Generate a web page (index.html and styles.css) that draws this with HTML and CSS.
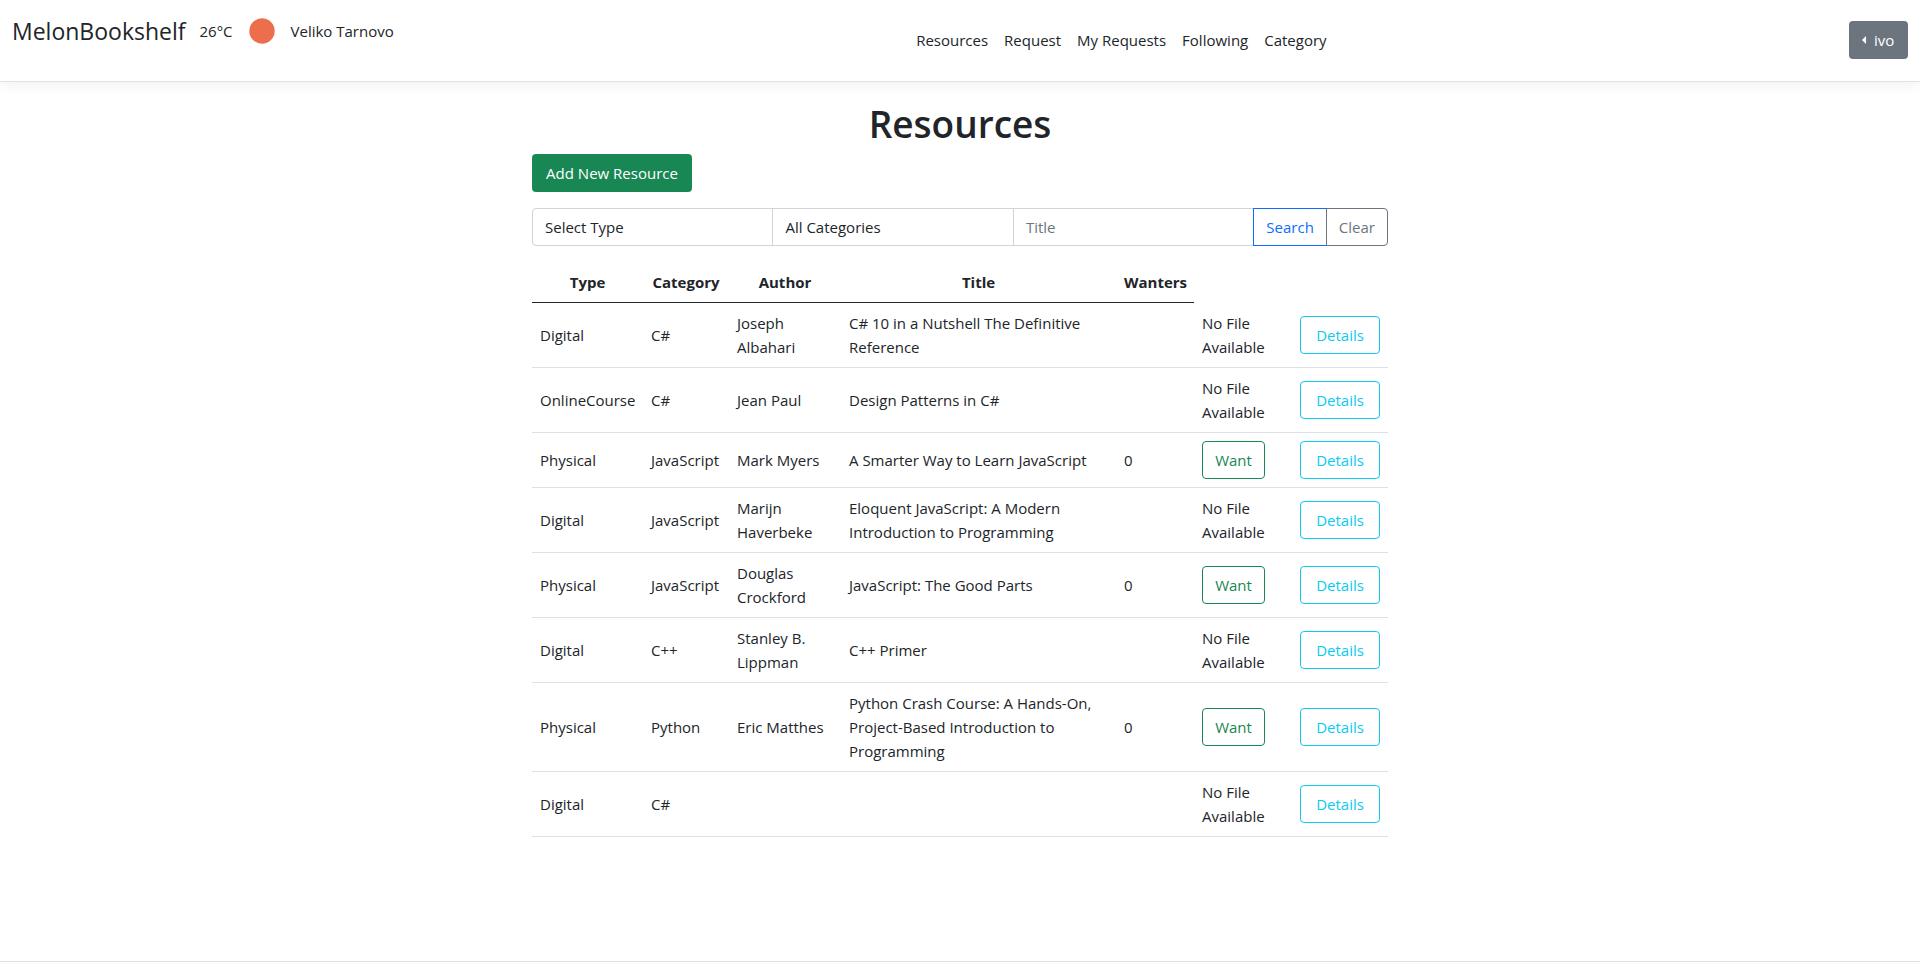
FILE: index.html
```html
<!DOCTYPE html>
<html lang="en">
<head>
<meta charset="utf-8">
<meta name="viewport" content="width=device-width, initial-scale=1">
<title>Resources - MelonBookshelf</title>
<link rel="stylesheet" href="styles.css">
</head>
<body>
<header class="site-header">
  <div class="brand-group">
    <a class="brand" href="#">MelonBookshelf</a>
    <div class="weather">
      <span>26°C</span>
      <svg class="weather-icon" viewBox="0 0 26 26" role="img" aria-label="Clear sky"><circle cx="13" cy="13" r="12.7" fill="#ec6e4c"/></svg>
      <span>Veliko Tarnovo</span>
    </div>
  </div>
  <nav class="main-nav">
    <a href="#">Resources</a>
    <a href="#">Request</a>
    <a href="#">My Requests</a>
    <a href="#">Following</a>
    <a href="#">Category</a>
  </nav>
  <button class="btn btn-user" type="button"><span class="caret"></span>ivo</button>
</header>

<main class="content">
  <h1>Resources</h1>
  <a class="btn btn-add" href="#">Add New Resource</a>
  <form class="filters">
    <select class="field" aria-label="Type"><option>Select Type</option></select>
    <select class="field" aria-label="Category"><option>All Categories</option></select>
    <input class="field" type="text" placeholder="Title" aria-label="Title">
    <button class="btn btn-search" type="button">Search</button>
    <button class="btn btn-clear" type="button">Clear</button>
  </form>
  <table class="resources">
    <colgroup><col class="c-type"><col class="c-category"><col class="c-author"><col class="c-title"><col class="c-wanters"><col class="c-file"><col class="c-details"></colgroup>
    <thead>
      <tr><th>Type</th><th>Category</th><th>Author</th><th>Title</th><th>Wanters</th></tr>
    </thead>
    <tbody>
      <tr><td>Digital</td><td>C#</td><td>Joseph Albahari</td><td>C# 10 in a Nutshell The Definitive Reference</td><td></td><td>No File Available</td><td><a class="btn btn-details" href="#">Details</a></td></tr>
      <tr><td>OnlineCourse</td><td>C#</td><td>Jean Paul</td><td>Design Patterns in C#</td><td></td><td>No File Available</td><td><a class="btn btn-details" href="#">Details</a></td></tr>
      <tr><td>Physical</td><td>JavaScript</td><td>Mark Myers</td><td>A Smarter Way to Learn JavaScript</td><td>0</td><td><button class="btn btn-want" type="button">Want</button></td><td><a class="btn btn-details" href="#">Details</a></td></tr>
      <tr><td>Digital</td><td>JavaScript</td><td>Marijn Haverbeke</td><td>Eloquent JavaScript: A Modern Introduction to Programming</td><td></td><td>No File Available</td><td><a class="btn btn-details" href="#">Details</a></td></tr>
      <tr><td>Physical</td><td>JavaScript</td><td>Douglas Crockford</td><td>JavaScript: The Good Parts</td><td>0</td><td><button class="btn btn-want" type="button">Want</button></td><td><a class="btn btn-details" href="#">Details</a></td></tr>
      <tr><td>Digital</td><td>C++</td><td>Stanley B. Lippman</td><td>C++ Primer</td><td></td><td>No File Available</td><td><a class="btn btn-details" href="#">Details</a></td></tr>
      <tr><td>Physical</td><td>Python</td><td>Eric Matthes</td><td>Python Crash Course: A Hands-On, Project-Based Introduction to Programming</td><td>0</td><td><button class="btn btn-want" type="button">Want</button></td><td><a class="btn btn-details" href="#">Details</a></td></tr>
      <tr><td>Digital</td><td>C#</td><td></td><td></td><td></td><td>No File Available</td><td><a class="btn btn-details" href="#">Details</a></td></tr>
    </tbody>
  </table>
</main>
<footer class="site-footer"></footer>
</body>
</html>
```

FILE: styles.css
```css
*, *::before, *::after { box-sizing: border-box; }

body {
  margin: 0;
  min-height: 100vh;
  display: flex;
  flex-direction: column;
  font-family: "Segoe UI", "Open Sans", "Noto Sans", sans-serif;
  font-size: 15px;
  line-height: 24px;
  color: #212529;
  background: #fff;
}

a { color: inherit; text-decoration: none; }

.site-header {
  display: flex;
  justify-content: space-between;
  align-items: flex-start;
  padding: 8px 12px 21px;
  border-bottom: 1px solid #dee2e6;
  box-shadow: 0 4px 12px rgba(0, 0, 0, 0.05);
}

.brand-group { display: flex; align-items: center; gap: 14px; padding-top: 5px; }
.brand { font-size: 23px; line-height: 36px; }
.weather { display: flex; align-items: center; gap: 16px; }
.weather-icon { width: 26px; height: 26px; }

.main-nav { display: flex; padding-top: 12px; }
.main-nav a { padding: 8px; }

.btn {
  display: inline-block;
  padding: 6px 12px;
  border: 1px solid transparent;
  border-radius: 4px;
  background: transparent;
  font: inherit;
  text-align: center;
  white-space: nowrap;
  cursor: pointer;
}

.btn-user {
  display: flex;
  align-items: center;
  gap: 8px;
  min-width: 59px;
  margin-top: 13px;
  color: #fff;
  background: #6c757d;
}

.caret {
  border-top: 4px solid transparent;
  border-bottom: 4px solid transparent;
  border-right: 4px solid #fff;
}

.content {
  flex: 1;
  width: 100%;
  max-width: 880px;
  margin: 0 auto;
  padding: 18px 12px;
}

h1 {
  margin: 0 0 6px;
  font-size: 37px;
  line-height: 48px;
  font-weight: 600;
  text-align: center;
}

.btn-add { min-width: 160px; color: #fff; background: #198754; }

.filters { display: flex; margin: 16px 0; }

.field {
  flex: 1 1 0;
  min-width: 0;
  height: 38px;
  margin: 0 0 0 -1px;
  padding: 6px 12px;
  border: 1px solid #ced4da;
  border-radius: 0;
  appearance: none;
  background: #fff;
  font: inherit;
  color: inherit;
}
.field:first-child { margin-left: 0; border-radius: 4px 0 0 4px; }
.field::placeholder { color: #6c757d; opacity: 1; }

.btn-search { min-width: 72px; margin-left: -1px; border-color: #0d6efd; border-radius: 0; color: #0d6efd; }
.btn-clear { min-width: 62px; margin-left: -1px; border-color: #6c757d; border-radius: 0 4px 4px 0; color: #6c757d; }

.resources { width: 100%; table-layout: fixed; border-collapse: collapse; }
.c-type { width: 111px; }
.c-category { width: 86px; }
.c-author { width: 112px; }
.c-wanters { width: 78px; }
.c-file { width: 98px; }
.c-details { width: 96px; }

.resources th, .resources td { padding: 8px; vertical-align: middle; }
.resources th { border-bottom: 1px solid #212529; font-weight: 700; text-align: center; }
.resources td { border-bottom: 1px solid #dee2e6; text-align: left; }

.resources .btn { display: block; }
.btn-want { min-width: 63px; border-color: #198754; color: #198754; }
.btn-details { border-color: #0dcaf0; color: #0dcaf0; }

.site-footer { border-top: 1px solid #dee2e6; }
```
